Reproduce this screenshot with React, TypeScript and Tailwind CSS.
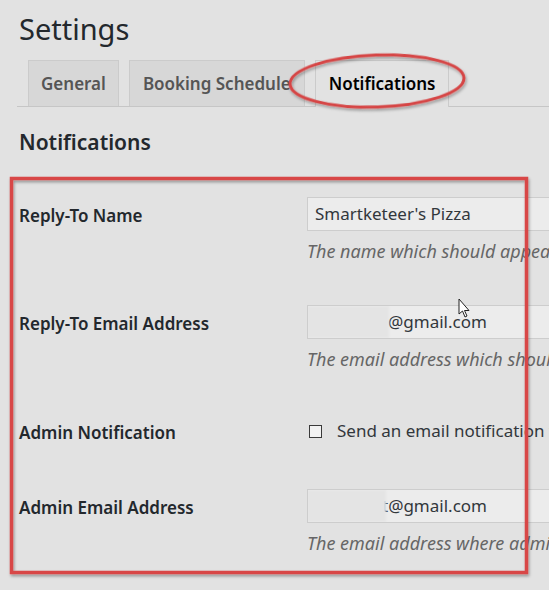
import React from 'react';

const Row: React.FC<{ label: string; children: React.ReactNode; className?: string }> = ({ label, children, className }) => (
  <div className={'flex ' + (className || '')}>
    <div className="w-[288px] shrink-0 whitespace-nowrap pt-[2px] text-[17px] font-semibold leading-[34px] text-[#23282d]">{label}</div>
    <div className="min-w-0 flex-1">{children}</div>
  </div>
);

const Input: React.FC<{ value: string; offset?: number; cover?: number }> = ({ value, offset, cover }) => (
  <div
    className="relative flex h-[34px] w-[300px] items-center overflow-hidden whitespace-nowrap border border-[#cdcdcd] bg-[#ececec] text-[17px] text-[#32373c]"
    style={{ paddingLeft: offset ?? 7 }}
  >
    <span>{value}</span>
    {cover ? (
      <span className="absolute -left-px top-0 h-full bg-[#e4e4e4] blur-[1px]" style={{ width: cover }} />
    ) : null}
  </div>
);

const Desc: React.FC<{ children: React.ReactNode }> = ({ children }) => (
  <p className="mt-[8px] whitespace-nowrap text-[18px] italic leading-[24px] text-[#666]">{children}</p>
);

export default function App() {
  return (
    <div className="relative h-[590px] w-[549px] overflow-hidden bg-[#e2e2e2] font-['Noto_Sans','Open_Sans',sans-serif] text-[#23282d]">
      <h1 className="pl-[19px] pt-[9px] text-[29px] font-normal leading-[40px] text-[#23282d]">Settings</h1>

      <div className="ml-[17px] mt-[11px] flex items-end gap-[10px] border-b border-[#c6c6c6] pl-[11px]">
        <div className="h-[46px] border border-b-0 border-[#cbcbcb] bg-[#d7d7d7] px-[12px] text-[17px] font-semibold leading-[45px] text-[#555]">General</div>
        <div className="h-[46px] border border-b-0 border-[#cbcbcb] bg-[#d7d7d7] px-[13px] text-[17px] font-semibold leading-[45px] text-[#555]">Booking Schedule</div>
        <div className="-mb-px h-[47px] border border-b-0 border-[#cbcbcb] bg-[#e2e2e2] px-[13px] text-[17px] font-semibold leading-[45px] text-[#000]">Notifications</div>
      </div>

      <h2 className="pl-[19px] pt-[20px] text-[21px] font-semibold leading-[30px]">Notifications</h2>

      <div className="pl-[19px] pt-[40px]">
        <Row label="Reply-To Name">
          <Input value="Smartketeer's Pizza" />
          <Desc>The name which should appear in the From field of emails</Desc>
        </Row>
        <Row label="Reply-To Email Address" className="mt-[42px]">
          <Input value="@gmail.com" offset={80} cover={82} />
          <Desc>The email address which should appear in the Reply-To field</Desc>
        </Row>
        <Row label="Admin Notification" className="mt-[43px]">
          <label className="flex h-[34px] items-center gap-[15px] whitespace-nowrap text-[17px] text-[#32373c]">
            <span className="ml-[2px] h-[13px] w-[13px] shrink-0 border border-[#3a3a3a] bg-[#f2f2f2]" />
            Send an email notification to an administrator
          </label>
        </Row>
        <Row label="Admin Email Address" className="mt-[39px]">
          <Input value="t@gmail.com" offset={74} cover={79} />
          <Desc>The email address where admin notifications should be sent</Desc>
        </Row>
      </div>

      {/* annotation overlays */}
      <svg className="pointer-events-none absolute left-0 top-0" width="549" height="590">
        <defs>
          <filter id="sh" x="-10%" y="-10%" width="120%" height="130%">
            <feDropShadow dx="1" dy="2" stdDeviation="1.5" floodColor="#000" floodOpacity="0.35" />
          </filter>
        </defs>
        <ellipse cx="377" cy="81" rx="87" ry="26" transform="rotate(-2 377 81)" fill="none" stroke="#d64545" strokeWidth="3" filter="url(#sh)" />
        <rect x="11.5" y="178.5" width="515" height="394" fill="none" stroke="#d84646" strokeWidth="3.5" filter="url(#sh)" />
        <path d="M459 299 L459 314 L462.5 311 L465 317 L467 316 L464.5 310.5 L469 310.5 Z" fill="#fff" stroke="#222" strokeWidth="1" strokeLinejoin="round" />
      </svg>
    </div>
  );
}
